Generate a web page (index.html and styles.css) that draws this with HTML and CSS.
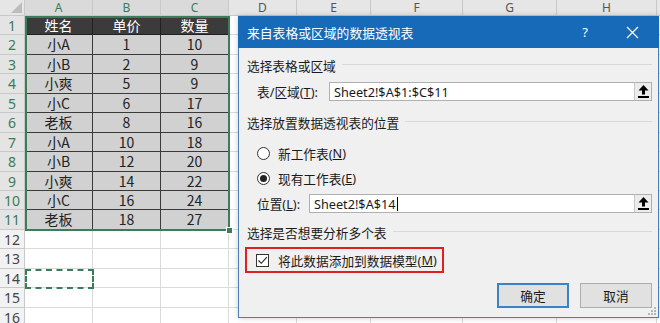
FILE: index.html
```html
<!DOCTYPE html>
<html lang="zh-CN">
<head>
  <meta charset="UTF-8">
  <title>来自表格或区域的数据透视表</title>
  <link rel="stylesheet" href="styles.css">
</head>
<body>
  <div class="sheet">
    <!-- worksheet grid -->
    <div class="grid">
      <div class="corner"></div><div class="ch sel">A</div><div class="ch sel">B</div><div class="ch sel">C</div><div class="ch">D</div><div class="ch">E</div><div class="ch">F</div><div class="ch">G</div><div class="ch">H</div><div class="ch"></div>

      <div class="rh sel">1</div><div class="hd">姓名</div><div class="hd">单价</div><div class="hd">数量</div><div></div><div></div><div></div><div></div><div></div><div></div>
      <div class="rh sel">2</div><div class="dt">小A</div><div class="dt">1</div><div class="dt">10</div><div></div><div></div><div></div><div></div><div></div><div></div>
      <div class="rh sel">3</div><div class="dt">小B</div><div class="dt">2</div><div class="dt">9</div><div></div><div></div><div></div><div></div><div></div><div></div>
      <div class="rh sel">4</div><div class="dt">小爽</div><div class="dt">5</div><div class="dt">9</div><div></div><div></div><div></div><div></div><div></div><div></div>
      <div class="rh sel">5</div><div class="dt">小C</div><div class="dt">6</div><div class="dt">17</div><div></div><div></div><div></div><div></div><div></div><div></div>
      <div class="rh sel">6</div><div class="dt">老板</div><div class="dt">8</div><div class="dt">16</div><div></div><div></div><div></div><div></div><div></div><div></div>
      <div class="rh sel">7</div><div class="dt">小A</div><div class="dt">10</div><div class="dt">18</div><div></div><div></div><div></div><div></div><div></div><div></div>
      <div class="rh sel">8</div><div class="dt">小B</div><div class="dt">12</div><div class="dt">20</div><div></div><div></div><div></div><div></div><div></div><div></div>
      <div class="rh sel">9</div><div class="dt">小爽</div><div class="dt">14</div><div class="dt">22</div><div></div><div></div><div></div><div></div><div></div><div></div>
      <div class="rh sel">10</div><div class="dt">小C</div><div class="dt">16</div><div class="dt">24</div><div></div><div></div><div></div><div></div><div></div><div></div>
      <div class="rh sel">11</div><div class="dt">老板</div><div class="dt">18</div><div class="dt">27</div><div></div><div></div><div></div><div></div><div></div><div></div>
      <div class="rh">12</div><div></div><div></div><div></div><div></div><div></div><div></div><div></div><div></div><div></div>
      <div class="rh">13</div><div></div><div></div><div></div><div></div><div></div><div></div><div></div><div></div><div></div>
      <div class="rh">14</div><div></div><div></div><div></div><div></div><div></div><div></div><div></div><div></div><div></div>
      <div class="rh">15</div><div></div><div></div><div></div><div></div><div></div><div></div><div></div><div></div><div></div>
      <div class="rh">16</div><div></div><div></div><div></div><div></div><div></div><div></div><div></div><div></div><div></div>
    </div>

    <!-- selected range A1:C11 and copy marquee on A14 -->
    <div class="selection"><span class="handle"></span></div>
    <div class="marquee"></div>

    <!-- PivotTable dialog -->
    <div class="dialog">
      <div class="titlebar">
        <span class="title">来自表格或区域的数据透视表</span>
        <span class="help">?</span>
        <svg class="close" width="13" height="13" viewBox="0 0 13 13"><path d="M1 1 L12 12 M12 1 L1 12" stroke="#fff" stroke-width="1.2"/></svg>
      </div>
      <div class="body">
        <div class="group">选择表格或区域</div>
        <div class="field range">
          <span class="label">表/区域(<u>T</u>):</span>
          <div class="input">
            <span>Sheet2!$A$1:$C$11</span>
            <span class="pick"><svg width="11" height="13" viewBox="0 0 11 13"><path d="M5.5 0 L10.5 5.5 H7 V9.5 H4 V5.5 H0.5 Z" fill="#000"/><rect x="0" y="11" width="11" height="2" fill="#000"/></svg></span>
          </div>
        </div>

        <div class="group">选择放置数据透视表的位置</div>
        <div class="radio first"><span class="dot"></span>新工作表(<u>N</u>)</div>
        <div class="radio on"><span class="dot"></span>现有工作表(<u>E</u>)</div>
        <div class="field place">
          <span class="label">位置(<u>L</u>):</span>
          <div class="input">
            <span>Sheet2!$A$14<i class="caret"></i></span>
            <span class="pick"><svg width="11" height="13" viewBox="0 0 11 13"><path d="M5.5 0 L10.5 5.5 H7 V9.5 H4 V5.5 H0.5 Z" fill="#000"/><rect x="0" y="11" width="11" height="2" fill="#000"/></svg></span>
          </div>
        </div>

        <div class="group">选择是否想要分析多个表</div>
        <div class="check">
          <span class="box"><svg width="11" height="11" viewBox="0 0 11 11"><path d="M1.5 5.5 L4.3 8.3 L9.8 2.2" fill="none" stroke="#222" stroke-width="1.1"/></svg></span>
          将此数据添加到数据模型(<u>M</u>)
        </div>

        <div class="buttons">
          <button class="btn ok">确定</button>
          <button class="btn">取消</button>
        </div>
      </div>
      <svg class="grip" width="10" height="10" viewBox="0 0 10 10">
        <rect x="8" y="2" width="2" height="2" fill="#b5b5b5"/>
        <rect x="5" y="5" width="2" height="2" fill="#b5b5b5"/>
        <rect x="8" y="5" width="2" height="2" fill="#b5b5b5"/>
        <rect x="2" y="8" width="2" height="2" fill="#b5b5b5"/>
        <rect x="5" y="8" width="2" height="2" fill="#b5b5b5"/>
        <rect x="8" y="8" width="2" height="2" fill="#b5b5b5"/>
      </svg>
    </div>
  </div>
</body>
</html>
```

FILE: styles.css
```css
* {
  box-sizing: border-box;
}
body {
  margin: 0;
  background: #fff;
  font-family: "Noto Sans CJK SC", sans-serif;
}
.sheet {
  position: relative;
  width: 660px;
  height: 323px;
  overflow: hidden;
}

/* ---- worksheet ---- */
.grid {
  display: grid;
  grid-template-columns: 25px 68px 68px 68px 68px 74px 92px 94px 100px 40px;
  grid-template-rows: 16px;
  grid-auto-rows: 19.45px;
}
.grid > div {
  border-right: 1px solid #dadada;
  border-bottom: 1px solid #dadada;
  font-size: 14px;
  line-height: 18px;
  text-align: center;
  color: #222;
  white-space: nowrap;
}
.grid > .corner {
  position: relative;
  background: #e6e6e6;
  border-color: #c8c8c8;
}
.corner::after {
  content: "";
  position: absolute;
  right: 2px;
  bottom: 2px;
  border-left: 11px solid transparent;
  border-bottom: 11px solid #bdbdbd;
}
.grid > .ch {
  background: #e6e6e6;
  border-color: #c8c8c8;
  color: #555;
  font-family: "Noto Sans", sans-serif;
  font-size: 12px;
  line-height: 15px;
}
.grid > .ch.sel {
  background: #dadada;
  color: #3d7a58;
}
.grid > .rh {
  background: #f2f2f2;
  border-color: #c8c8c8;
  color: #444;
  font-family: "Noto Sans", sans-serif;
  font-size: 14px;
  line-height: 19px;
}
.grid > .rh.sel {
  background: #e4e4e4;
  color: #3d7a58;
}
.grid > .hd {
  background: #3b3b3b;
  color: #fff;
  border-color: #202020;
}
.grid > .dt {
  background: #d1d1d1;
  color: #222;
  border-color: #3a3a3a;
}

.selection {
  position: absolute;
  left: 25px;
  top: 16px;
  width: 205px;
  height: 215px;
  border: 2px solid #3b7d5a;
}
.handle {
  position: absolute;
  right: -5px;
  bottom: -5px;
  width: 7px;
  height: 7px;
  background: #3b7d5a;
  border: 1px solid #fff;
}
.marquee {
  position: absolute;
  left: 25px;
  top: 269px;
  width: 69px;
  height: 20px;
  border: 2px dashed #3b7d5a;
}

/* ---- dialog ---- */
.dialog {
  position: absolute;
  left: 238px;
  top: 16px;
  width: 421px;
  height: 302px;
  background: #f0f0f0;
  border: 1px solid #4a7fb5;
  border-top: none;
  box-shadow: 0 0 6px rgba(0, 0, 0, 0.2);
  font-family: "Noto Sans", "Noto Sans CJK SC", sans-serif;
  font-size: 12.7px;
  color: #1a1a1a;
}
.titlebar {
  display: flex;
  align-items: center;
  height: 32px;
  margin: 0 -1px;
  padding-left: 9px;
  background: #176ab8;
  color: #fff;
}
.title {
  flex: 1;
  font-size: 12.8px;
}
.help {
  width: 16px;
  text-align: center;
  font-size: 13px;
  margin-right: 33px;
}
.close {
  margin-right: 20px;
}
.body {
  padding: 10px 6px 0 8px;
}
.group {
  display: flex;
  align-items: center;
  height: 16px;
  line-height: 16px;
}
.group::after {
  content: "";
  flex: 1;
  height: 1px;
  margin: -3px 0 0 6px;
  background: #d9d9d9;
}
.field {
  display: flex;
  align-items: center;
  height: 19px;
  margin-top: 8px;
  padding-left: 10px;
}
.range .label {
  width: 72px;
}
.place .label {
  width: 52px;
}
.input {
  flex: 1;
  display: flex;
  align-items: center;
  justify-content: space-between;
  height: 19px;
  padding-left: 4px;
  background: #fff;
  border: 1px solid #b0b0b0;
}
.pick {
  display: flex;
  align-items: center;
  justify-content: center;
  width: 17px;
  height: 17px;
  background: #ececec;
  border-left: 1px solid #c8c8c8;
}
.caret {
  display: inline-block;
  width: 1px;
  height: 14px;
  margin-left: 1px;
  background: #000;
  vertical-align: -2px;
}
.range + .group {
  margin-top: 14px;
}
.radio {
  display: flex;
  align-items: center;
  height: 16px;
  padding-left: 10px;
}
.radio.first {
  margin-top: 14px;
}
.radio.on {
  margin-top: 9px;
}
.dot {
  position: relative;
  width: 13px;
  height: 13px;
  margin-right: 8px;
  border: 1px solid #333;
  border-radius: 50%;
  background: #fff;
}
.radio.on .dot::after {
  content: "";
  position: absolute;
  left: 2px;
  top: 2px;
  width: 7px;
  height: 7px;
  border-radius: 50%;
  background: #222;
}
.place {
  margin-top: 8px;
}
.place + .group {
  margin-top: 12px;
}
.check {
  display: flex;
  align-items: center;
  width: 199px;
  height: 26px;
  margin: 6px 0 0 -2px;
  padding-left: 9px;
  border: 2px solid #e0201e;
}
.box {
  display: flex;
  align-items: center;
  justify-content: center;
  width: 13px;
  height: 13px;
  margin-right: 9px;
  border: 1px solid #333;
  background: #fff;
}
.buttons {
  display: flex;
  justify-content: flex-end;
  gap: 11px;
  margin-top: 10px;
}
.btn {
  width: 72px;
  height: 25px;
  padding: 0;
  background: #e1e1e1;
  border: 1px solid #adadad;
  font-family: "Noto Sans CJK SC", sans-serif;
  font-size: 12.7px;
  color: #1a1a1a;
}
.btn.ok {
  border: 2px solid #3a83c4;
}
.grip {
  position: absolute;
  right: 2px;
  bottom: 2px;
}
```
